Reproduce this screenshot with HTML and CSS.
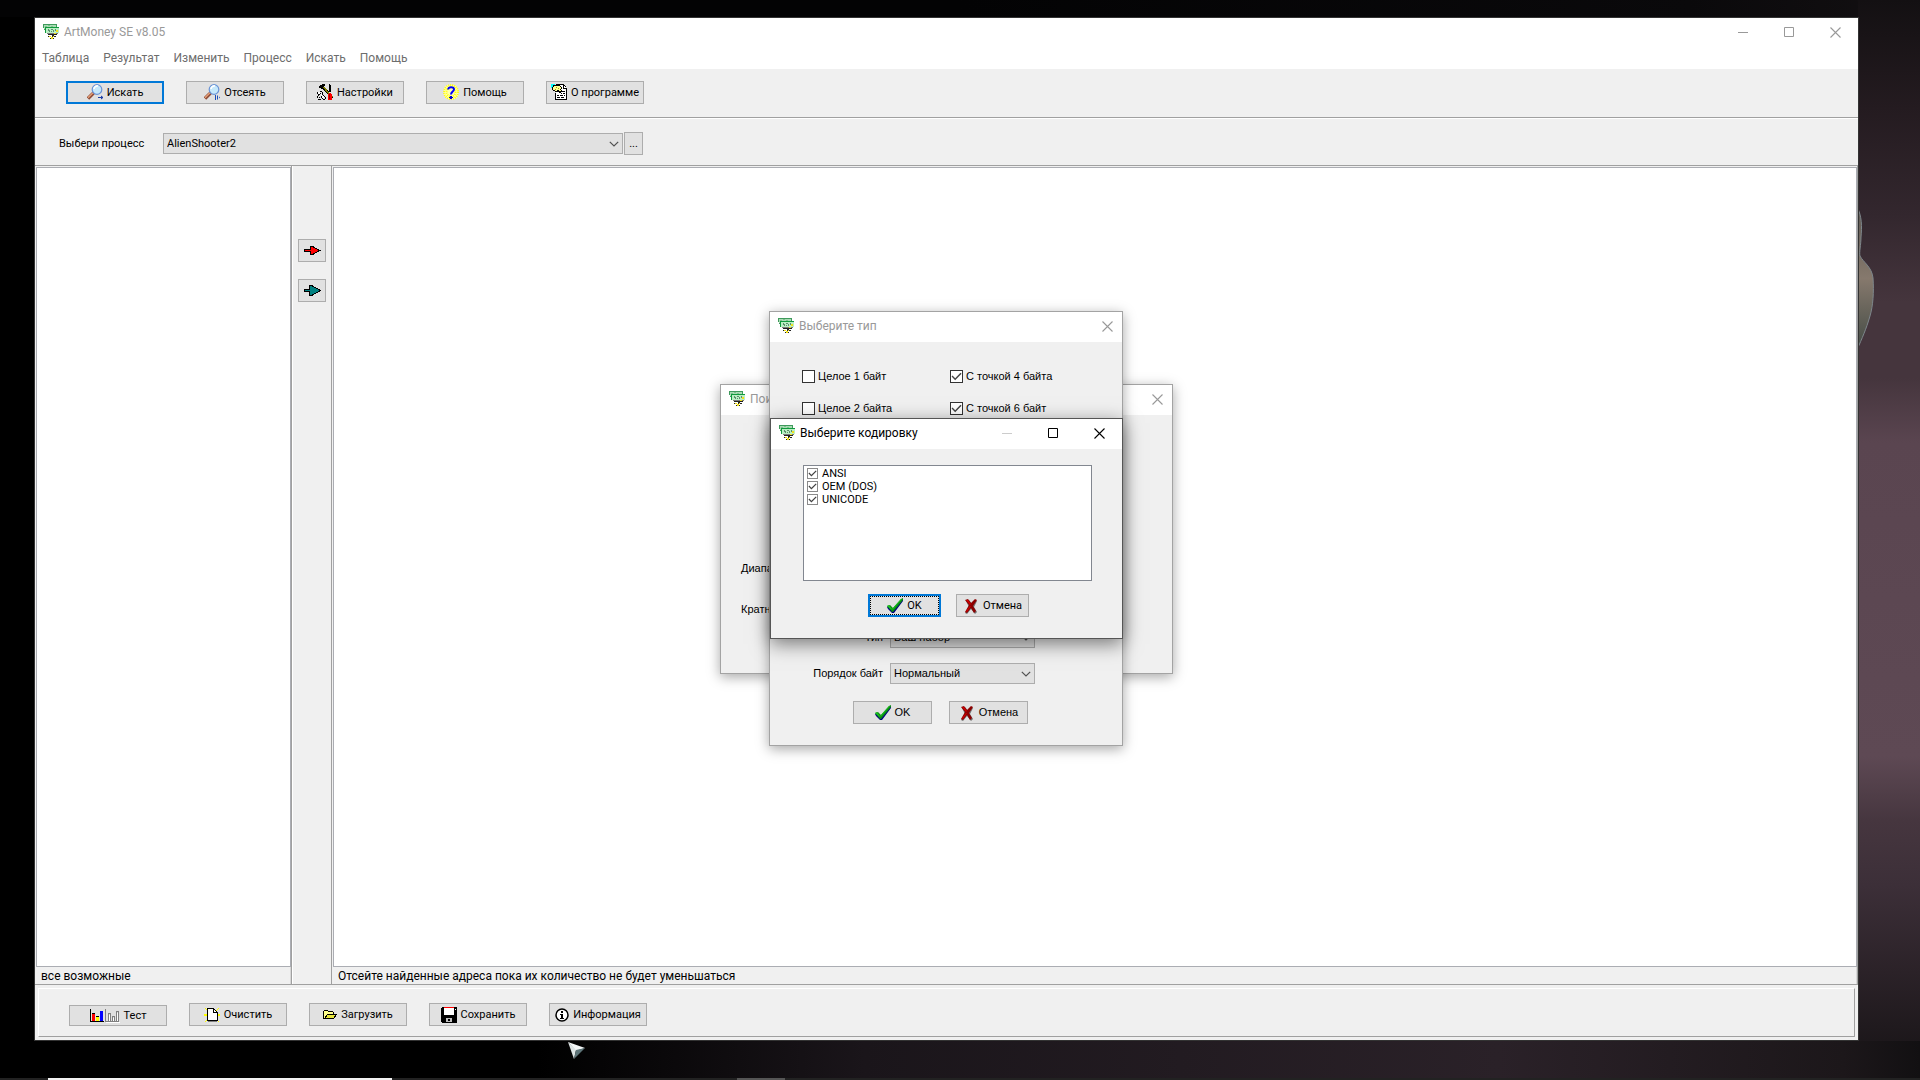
FILE: index.html
```
<!DOCTYPE html>
<html lang="ru">
<head>
  <meta charset="UTF-8">
  <meta name="viewport" content="width=device-width, initial-scale=1.0">
  <title>ArtMoney SE v8.05</title>
  <link rel="stylesheet" href="styles.css">
</head>
<body>
  <!-- icon set -->
  <svg class="sprite" width="0" height="0" aria-hidden="true">
    <symbol id="i-money" viewBox="0 0 16 16">
      <path fill="#3f9a5c" d="M0 0h14v6H1V4H0z"/>
      <path fill="#a9dcb4" d="M1 1h12v4H1z"/>
      <path fill="#7dbf8d" d="M2 2h2v1H2zM5 1h2v1H5zM8 2h2v1H8z"/>
      <path fill="#0f9a3c" d="M2 3h14v1H3v5H2z"/>
      <path fill="#b9efc3" d="M3 4h13v5H3z"/>
      <path fill="#5b8f6c" d="M5 5h1v2H5zM6 6h1v2H6zM8 5h2v1H8zM8 7h1v1H8zM10 6h1v2h-1zM12 5h1v2h-1z"/>
      <path fill="#7a7a7a" d="M4 9h11v1H4z"/>
      <path fill="#222" d="M5 10h9v1h-3v2H9v-2H5z"/>
      <path fill="#f2e21c" d="M13 6h2v2h-2zM11 9h2v1h-2zM6 12h2v1H6zM8 13h2v2H8zM10 12h1v1h-1z"/>
      <path fill="#222" d="M5 12h1v1H5zM7 14h1v1H7zM10 14h1v1h-1zM11 12h2v1h-2z"/>
    </symbol>
    <symbol id="i-lens" viewBox="0 0 16 16">
      <path d="M1 14.500L6.500 9" stroke="#8d4a36" stroke-width="3.400"/>
      <path d="M1 13.800L6 8.800" stroke="#e5a079" stroke-width="1.500"/>
      <circle cx="10" cy="5.500" r="4.800" fill="#c5e8fb" stroke="#6a93d6" stroke-width="1.200"/>
      <path d="M7 5a3.300 3.300 0 0 1 4-3" fill="none" stroke="#fff" stroke-width="1.600"/>
    </symbol>
    <symbol id="i-search" viewBox="0 0 16 16">
      <use href="#i-lens"/>
      <path fill="#1c3fa8" d="M11 13h3v-1.500l2.500 2-2.500 2V14h-3z"/>
    </symbol>
    <symbol id="i-sieve" viewBox="0 0 16 16">
      <use href="#i-lens"/>
      <path fill="#1c4fb8" d="M11 11h1v5h-1zM13 11l1 1v3l-1 1zM15 12.500l1 1-1 1z"/>
    </symbol>
    <symbol id="i-tools" viewBox="0 0 16 16">
      <path fill="#000" d="M2 2h1V1h2V0h3v2H7v1H6v2H4V4H2zM12 1h2v7h-2zM12 0h1v1h-1z"/>
      <path d="M6 3l9.500 11" stroke="#000" stroke-width="2.500"/>
      <path d="M6.500 3l9 10.500" stroke="#808000" stroke-width="1.500"/>
      <path fill="#000" d="M0 8h1v2H0zM1 10h2v1H1zM3 7h2v1H3zM5 8h1v3H5zM3 9h1v1H3zM6 11h1v1H6zM7 12h1v1H7zM8 13h1v2H8zM6 15h2v1H6zM0 12h1v2H0zM1 11h1v1H1zM2 13h1v1H2zM4 12h1v2H4zM1 15h3v1H1zM5 14h1v1H5z"/>
      <path fill="#fff" d="M1 8h2v2H1zM4 10h1v2H4zM5 12h2v2H5z"/>
      <path fill="#f00" d="M11 10h1V9h2v1h1v6h-4z"/>
      <path fill="#900" d="M12 10h1v5h-1z"/>
    </symbol>
    <symbol id="i-help" viewBox="0 0 16 16">
      <path fill="#ffffb0" d="M4 1h8v1h2v2h1v8h-1v2h-2v1H4v-1H2v-2H1V4h1V2h2z"/>
      <circle cx="8" cy="8" r="7" fill="none" stroke="#ff0" stroke-width="2" stroke-dasharray="1 1"/>
      <circle cx="8" cy="8" r="4.500" fill="none" stroke="#ff0" stroke-width="2" stroke-dasharray="1 1"/>
      <path d="M5.200 5.500C5 2.400 11 2.400 11 5.300 11 7.500 8 7.500 8 10.500" fill="none" stroke="#00f" stroke-width="2"/>
      <path fill="#00c" d="M7 12h2v1h1v1H9v1H7v-1H6v-1h1z"/>
    </symbol>
    <symbol id="i-about" viewBox="0 0 16 16">
      <path fill="#0ff" d="M0 0h4v2H2v2H0z"/>
      <path fill="#fff" d="M5 1h8v1h1v1h1v1h1v11H5z"/>
      <path fill="#000" d="M5 0h8v1H5zM13 1h1v1h-1zM14 2h1v1h-1zM12 1h1v4h-1zM13 4h3v1h-3zM15 5h1v10h-1zM4 15h12v1H4zM4 9h1v6H4z"/>
      <path fill="#000" d="M11 7h3v1h-3zM10 9h1v1h-1zM12 9h2v1h-2zM6 11h2v1H6zM9 11h3v1H9zM13 11h1v1h-1zM6 13h3v1H6zM10 13h3v1h-3z"/>
      <path fill="#000" d="M2 1h7v1h1v1h1v2h-1v1h1v2h-1v1H8V8H4V7H2V6H1V3h1z"/>
      <path fill="#ffff90" d="M3 2h6v1h1v2H9v1h1v1H8V6H6v1H4V6H2V3h1z"/>
      <path fill="#a0a000" d="M5 3h1v1H5zM7 4h1v1H7zM4 5h1v1H4z"/>
    </symbol>
    <symbol id="i-test" viewBox="0 0 30 14">
      <path fill="#f00" d="M2 4h3v9H2z"/>
      <path fill="#ff0" d="M6 8h3v5H6z"/>
      <path fill="#00f" d="M10 2h3v11h-3z"/>
      <path fill="#000" d="M0 0h1v12h13v1H0zM2 4h3v1H2zM6 7h3v1H6z"/>
      <path fill="#fff" d="M16 13h14v1H16zM19 6h1v6h-1zM23 9h1v3h-1zM27 4h1v8h-1z"/>
      <path fill="none" stroke="#808080" d="M15.500 0v12.500H29M18.500 12V4.500h2V12M22.500 12V7.500h2V12M26.500 12V2.500h2V12"/>
    </symbol>
    <symbol id="i-clear" viewBox="0 0 16 16">
      <path d="M8 8L1 1M8 8l7-7M8 8L1 15M8 8l7 7M0 8h16" stroke="#ff0" stroke-width="1.200"/>
      <path fill="#808080" d="M4 14h9v1H4z"/>
      <path fill="#fff" d="M4 2h6l3 3v8H4z"/>
      <path fill="#000" d="M3 1h7v1h1v1h1v1h1v1h1v9H3zM4 2v11h9V6H9V2z" fill-rule="evenodd"/>
      <path fill="#fff" d="M10 3h1v1h1v1h-2z"/>
    </symbol>
    <symbol id="i-open" viewBox="0 0 14 14">
      <path fill="#ffff8c" stroke="#000" d="M.5 10.500v-7l1-1h3l1 1h4l1 1v2"/>
      <path fill="#e6e63c" stroke="#000" d="M1.500 10.500l3-4h9l-3 4z"/>
    </symbol>
    <symbol id="i-save" viewBox="0 0 16 16">
      <path fill="#000" d="M1 0h15v16H1l-1-1V1z"/>
      <path fill="#fff" d="M3 1h10v7H3z"/>
      <path fill="#f00" d="M3 0h10v1H3z"/>
      <path fill="#c0c0c0" d="M5 11h6v4H5z"/>
      <path fill="#000" d="M7 12h2v2H7z"/>
      <path fill="#fff" d="M14 2h1v1h-1z"/>
    </symbol>
    <symbol id="i-info" viewBox="0 0 14 14">
      <circle cx="7" cy="7" r="6" fill="#fff" stroke="#000" stroke-width="1.500"/>
      <path fill="#000" d="M6 3h2v2H6zM5 6h3v4h1v1H5v-1h1V7H5z"/>
    </symbol>
    <symbol id="i-ok" viewBox="0 0 16 16">
      <path fill="#000080" d="M0 9l2-1 4 4 9-11h1v2L7 15H5L1 11z"/>
      <path fill="#0a8a12" d="M0 8l3-1 3 3 8-9 2-1v2L6 14H5z"/>
      <path fill="#18c020" d="M0 8l2-1 3 4 9-10h1L6 11.500H4z"/>
    </symbol>
    <symbol id="i-cancel" viewBox="0 0 14 16">
      <path fill="#707070" d="M2 3l3-1 3 4 3-4 2 1-3 6 3 5-2 2-4-5-4 5-2-1 4-6z"/>
      <path fill="#8c0000" d="M1 2l3-1 3 4 4-4 2 1-4 6 3 5-2 2-3-5-4 5-2-1 4-7z"/>
      <path fill="#c00" d="M2 2h2l3 4-1 1zM2 13l4-5h1l-4 6z"/>
    </symbol>
    <symbol id="i-min" viewBox="0 0 11 11"><path d="M0 5.500h10" stroke="currentColor"/></symbol>
    <symbol id="i-max" viewBox="0 0 11 11"><path d="M.5.5h9v9h-9z" fill="none" stroke="currentColor"/></symbol>
    <symbol id="i-close" viewBox="0 0 11 11"><path d="M.5.5l10 10M10.500.5l-10 10" stroke="currentColor" stroke-width="1.100"/></symbol>
    <symbol id="i-down" viewBox="0 0 10 6"><path d="M.8.8L5 5 9.200.8" fill="none" stroke="#505050" stroke-width="1.200"/></symbol>
    <symbol id="i-arrow-red" viewBox="0 0 17 11">
      <path fill="#f00" stroke="#000" d="M.5 4.500h6v-3h2l7 4-7 4h-2v-3h-6z"/>
    </symbol>
    <symbol id="i-arrow-teal" viewBox="0 0 17 11">
      <path fill="#008080" stroke="#000" d="M.5 4.500h5v-4h2l9 5-9 5h-2v-4h-5z"/>
    </symbol>
  </svg>

  <svg class="wallpaper-figure" width="20" height="152" viewBox="0 0 20 152" aria-hidden="true">
    <defs>
      <linearGradient id="skin" x1="0" y1="0" x2="0" y2="1">
        <stop offset="0" stop-color="#5d5751"/>
        <stop offset=".5" stop-color="#86796d"/>
        <stop offset="1" stop-color="#424a44"/>
      </linearGradient>
    </defs>
    <path fill="url(#skin)" stroke="#7e878c" d="M0 3c5 9 5 20 4 30 0 8-2 15-1 19 3 6 12 11 13 22 1 14 0 28-3 38-4 14-8 22-13 34z"/>
  </svg>

  <div class="window main">
    <header class="titlebar">
      <svg class="icon crisp"><use href="#i-money"/></svg>
      <h1>ArtMoney SE v8.05</h1>
      <button type="button" class="ctl" aria-label="Свернуть"><svg><use href="#i-min"/></svg></button>
      <button type="button" class="ctl" aria-label="Развернуть"><svg><use href="#i-max"/></svg></button>
      <button type="button" class="ctl" aria-label="Закрыть"><svg><use href="#i-close"/></svg></button>
    </header>

    <nav class="menu">
      <a href="#">Таблица</a>
      <a href="#">Результат</a>
      <a href="#">Изменить</a>
      <a href="#">Процесс</a>
      <a href="#">Искать</a>
      <a href="#">Помощь</a>
    </nav>

    <div class="toolbar">
      <button type="button" class="btn default"><svg class="icon"><use href="#i-search"/></svg>Искать</button>
      <button type="button" class="btn"><svg class="icon"><use href="#i-sieve"/></svg>Отсеять</button>
      <button type="button" class="btn"><svg class="icon crisp"><use href="#i-tools"/></svg>Настройки</button>
      <button type="button" class="btn"><svg class="icon"><use href="#i-help"/></svg>Помощь</button>
      <button type="button" class="btn"><svg class="icon crisp"><use href="#i-about"/></svg>О программе</button>
    </div>

    <div class="process">
      <label for="process">Выбери процесс</label>
      <span class="combo">
        <select id="process"><option>AlienShooter2</option></select>
        <svg><use href="#i-down"/></svg>
      </span>
      <button type="button" class="btn more">...</button>
    </div>

    <main class="work">
      <section class="pane">
        <div class="list"></div>
        <p class="status">все возможные</p>
      </section>
      <div class="transfer">
        <button type="button" class="btn" aria-label="Добавить"><svg class="arrow crisp"><use href="#i-arrow-red"/></svg></button>
        <button type="button" class="btn" aria-label="Добавить все"><svg class="arrow crisp"><use href="#i-arrow-teal"/></svg></button>
      </div>
      <section class="pane">
        <div class="list"></div>
        <p class="status">Отсейте найденные адреса пока их количество не будет уменьшаться</p>
      </section>
    </main>

    <footer class="bottom">
      <div class="bottom-inner">
        <button type="button" class="btn test"><svg class="icon wide crisp"><use href="#i-test"/></svg>Тест</button>
        <button type="button" class="btn"><svg class="icon crisp"><use href="#i-clear"/></svg>Очистить</button>
        <button type="button" class="btn"><svg class="icon small crisp"><use href="#i-open"/></svg>Загрузить</button>
        <button type="button" class="btn"><svg class="icon crisp"><use href="#i-save"/></svg>Сохранить</button>
        <button type="button" class="btn"><svg class="icon small"><use href="#i-info"/></svg>Информация</button>
      </div>
    </footer>
  </div>

  <div class="window dialog search">
    <header class="titlebar">
      <svg class="icon crisp"><use href="#i-money"/></svg>
      <h2>Поиск</h2>
      <button type="button" class="ctl small" aria-label="Закрыть"><svg><use href="#i-close"/></svg></button>
    </header>
    <div class="search-body">
      <span>Диапазон</span>
      <span>Кратность</span>
    </div>
  </div>

  <div class="window dialog type">
    <header class="titlebar">
      <svg class="icon crisp"><use href="#i-money"/></svg>
      <h2>Выберите тип</h2>
      <button type="button" class="ctl small" aria-label="Закрыть"><svg><use href="#i-close"/></svg></button>
    </header>
    <div class="type-checks">
      <label><input type="checkbox">Целое 1 байт</label>
      <label><input type="checkbox" checked>С точкой 4 байта</label>
      <label><input type="checkbox">Целое 2 байта</label>
      <label><input type="checkbox" checked>С точкой 6 байт</label>
    </div>
    <div class="type-fields">
      <label for="kind">Тип</label>
      <span class="combo">
        <select id="kind"><option>Ваш набор</option></select>
        <svg><use href="#i-down"/></svg>
      </span>
      <label for="order">Порядок байт</label>
      <span class="combo">
        <select id="order"><option>Нормальный</option></select>
        <svg><use href="#i-down"/></svg>
      </span>
    </div>
    <div class="actions">
      <button type="button" class="btn"><svg class="icon"><use href="#i-ok"/></svg>OK</button>
      <button type="button" class="btn"><svg class="icon"><use href="#i-cancel"/></svg>Отмена</button>
    </div>
  </div>

  <div class="window dialog encoding">
    <header class="titlebar">
      <svg class="icon crisp"><use href="#i-money"/></svg>
      <h2>Выберите кодировку</h2>
      <button type="button" class="ctl" disabled aria-label="Свернуть"><svg><use href="#i-min"/></svg></button>
      <button type="button" class="ctl" aria-label="Развернуть"><svg><use href="#i-max"/></svg></button>
      <button type="button" class="ctl" aria-label="Закрыть"><svg><use href="#i-close"/></svg></button>
    </header>
    <div class="checklist">
      <label><input type="checkbox" checked>ANSI</label>
      <label><input type="checkbox" checked>OEM (DOS)</label>
      <label><input type="checkbox" checked>UNICODE</label>
    </div>
    <div class="actions">
      <button type="button" class="btn default focused"><svg class="icon"><use href="#i-ok"/></svg>OK</button>
      <button type="button" class="btn"><svg class="icon"><use href="#i-cancel"/></svg>Отмена</button>
    </div>
  </div>

  <svg class="cursor" width="18" height="18" viewBox="0 0 18 18" aria-hidden="true">
    <path fill="#f4f8f8" d="M0 0l17 6-9 3z"/>
    <path fill="#dfe6e6" d="M0 0l8 8-2 9z"/>
    <path fill="#5d7478" d="M17 6l-11 11 2-9z"/>
  </svg>

  <div class="taskbar">
    <span class="task-search"></span>
    <span class="task-active"></span>
  </div>
</body>
</html>
```
FILE: styles.css
```
* {
  box-sizing: border-box;
}

body {
  display: flex;
  margin: 0;
  min-height: 100vh;
  padding: 17px 61px 39px 34px;
  overflow: hidden;
  background-color: #000;
  background-image:
    linear-gradient(to right, #000 28%, #1a151a 45%, #2a2128 78%, #1c171a 96%, #121012),
    linear-gradient(to bottom, #131012, #241b20 10%, #33272e 20%, #45353d 28%, #45353d 35%, #5a4550 41%, #5e4954 70%, #46363f 76%, #3c2f38 82%, #2b2228 90%, #151214),
    linear-gradient(to right, #030304 50%, #0a090b 88%, #131012);
  background-position: left bottom, right top, left top;
  background-size: 100% 39px, 62px 100%, 100% 17px;
  background-repeat: no-repeat;
  font: 11px/13px Roboto, "Noto Sans", sans-serif;
  color: #000;
}

h1,
h2,
p {
  margin: 0;
  font-size: 12px;
  font-weight: normal;
}

button,
select {
  padding: 0;
  font: inherit;
  color: inherit;
}

.sprite {
  position: absolute;
}

.wallpaper-figure {
  position: absolute;
  top: 204px;
  right: 43px;
}

.icon {
  flex: none;
  width: 16px;
  height: 16px;
}

.icon.small {
  width: 14px;
  height: 14px;
}

.icon.wide {
  width: 30px;
  height: 14px;
}

.crisp {
  shape-rendering: crispEdges;
}

/* windows */
.window {
  display: flex;
  flex-direction: column;
  background-color: #f0f0f0;
}

.main {
  position: relative;
  flex: 1;
  border: 1px solid #333;
}

.titlebar {
  display: flex;
  align-items: center;
  height: 30px;
  padding: 0 0 2px 8px;
  background-color: #fff;
  color: #999;
}

.titlebar h1,
.titlebar h2 {
  flex: 1;
  margin-left: 5px;
}

.ctl {
  display: flex;
  align-items: center;
  justify-content: center;
  width: 46px;
  height: 28px;
  border: 0;
  background: none;
}

.ctl.small {
  width: 30px;
}

.ctl svg {
  width: 11px;
  height: 11px;
}

.ctl:disabled {
  color: #ccc;
}

.menu {
  display: flex;
  gap: 14px;
  height: 20px;
  padding-left: 7px;
  background-color: #fff;
  font-size: 12px;
  line-height: 20px;
}

.menu a {
  color: #6d6d6d;
  text-decoration: none;
}

/* buttons */
.btn {
  display: flex;
  align-items: center;
  justify-content: center;
  gap: 4px;
  width: 98px;
  height: 23px;
  border: 1px solid #adadad;
  background-color: #e1e1e1;
  white-space: nowrap;
}

.btn.default {
  border: 2px solid #0078d7;
}

.btn.focused {
  outline: 1px dotted #000;
  outline-offset: -3px;
}

.toolbar {
  display: flex;
  align-items: center;
  gap: 22px;
  height: 50px;
  padding: 0 0 2px 31px;
  border-top: 1px solid #fff;
  border-bottom: 1px solid #a0a0a0;
}

.process {
  display: flex;
  align-items: center;
  height: 48px;
  padding: 2px 0 0 24px;
  border-top: 1px solid #fff;
  border-bottom: 1px solid #a0a0a0;
}

.process label {
  width: 104px;
}

.process .combo {
  width: 460px;
}

.btn.more {
  width: 19px;
  margin-left: 1px;
}

.combo {
  position: relative;
  display: block;
  height: 21px;
}

.combo select {
  width: 100%;
  height: 100%;
  padding-left: 3px;
  border: 1px solid #adadad;
  border-radius: 0;
  background-color: #e1e1e1;
  appearance: none;
}

.combo svg {
  position: absolute;
  top: 8px;
  right: 4px;
  width: 10px;
  height: 6px;
  pointer-events: none;
}

/* work area */
.work {
  display: grid;
  grid-template-columns: 257px 40px 1fr;
  flex: 1;
  border-bottom: 1px solid #a0a0a0;
}

.pane {
  display: flex;
  flex-direction: column;
  padding: 1px 0 0 1px;
  border-right: 1px solid #a0a0a0;
}

.list {
  flex: 1;
  border: 1px solid #abadb3;
  background-color: #fff;
}

.status {
  height: 17px;
  padding-left: 5px;
  border-right: 1px solid #d7d7d7;
  line-height: 19px;
}

.transfer {
  display: flex;
  flex-direction: column;
  align-items: center;
  gap: 17px;
  padding-top: 73px;
  border-left: 1px solid #fff;
  border-right: 1px solid #a0a0a0;
}

.transfer .btn {
  width: 28px;
}

.arrow {
  width: 17px;
  height: 11px;
}

.bottom {
  padding: 3px;
}

.bottom-inner {
  display: flex;
  align-items: flex-end;
  gap: 22px;
  height: 49px;
  padding: 0 0 10px 30px;
  border: 1px solid;
  border-color: #fff #a0a0a0 #a0a0a0 #fff;
}

.btn.test {
  height: 21px;
}

/* dialogs */
.dialog {
  position: absolute;
  border: 1px solid #a3a3a3;
  box-shadow: 0 3px 12px rgba(0, 0, 0, 0.35);
}

.search {
  top: 384px;
  left: 720px;
  width: 453px;
  height: 290px;
}

.search-body {
  display: flex;
  flex-direction: column;
  gap: 28px;
  padding: 147px 0 0 20px;
}

.type {
  top: 311px;
  left: 769px;
  width: 354px;
  height: 435px;
}

/* these two forms use the old system font */
.search-body,
.type-checks,
.type-fields,
.type .actions {
  font-family: "Liberation Sans", Arial, sans-serif;
}

.type-checks {
  display: grid;
  grid-template-columns: 148px 148px;
  gap: 19px 0;
  padding: 28px 0 0 32px;
}

.dialog label {
  display: flex;
  align-items: center;
}

input[type="checkbox"] {
  width: 13px;
  height: 13px;
  margin: 0 3px 0 0;
  border: 1px solid #333;
  background-color: #fff;
  appearance: none;
}

input[type="checkbox"]:checked::before {
  content: "";
  display: block;
  width: 100%;
  height: 100%;
  background-color: #444;
  clip-path: polygon(5% 50%, 14% 40%, 38% 65%, 86% 16%, 96% 25%, 38% 84%);
}

.type-fields {
  display: grid;
  grid-template-columns: 113px 145px;
  gap: 15px 7px;
  margin-top: auto;
}

.type-fields label {
  justify-content: flex-end;
}

.actions {
  display: flex;
}

.type .actions {
  gap: 17px;
  padding: 17px 0 21px 83px;
}

.type .btn {
  width: 79px;
}

.encoding {
  top: 418px;
  left: 770px;
  width: 353px;
  height: 221px;
  border-color: #555;
  box-shadow: 0 5px 18px rgba(0, 0, 0, 0.5);
}

.encoding .titlebar {
  color: #000;
}

.checklist {
  flex: 1;
  margin: 16px 30px 0 32px;
  padding: 1px 3px;
  border: 1px solid #828790;
  background-color: #fff;
}

.checklist input[type="checkbox"] {
  width: 11px;
  height: 11px;
  margin-right: 4px;
  border-color: #8a8a8a;
}

.encoding .actions {
  gap: 15px;
  padding: 13px 0 21px 97px;
}

.encoding .btn {
  width: 73px;
}

/* desktop */
.cursor {
  position: absolute;
  top: 1042px;
  left: 568px;
}

.taskbar {
  position: fixed;
  right: 0;
  bottom: 0;
  left: 0;
  display: flex;
  gap: 345px;
  height: 2px;
  padding-left: 48px;
  background-color: #222;
}

.task-search {
  width: 344px;
  background-color: #f2f2f2;
}

.task-active {
  width: 48px;
  background-color: #555;
}
```
